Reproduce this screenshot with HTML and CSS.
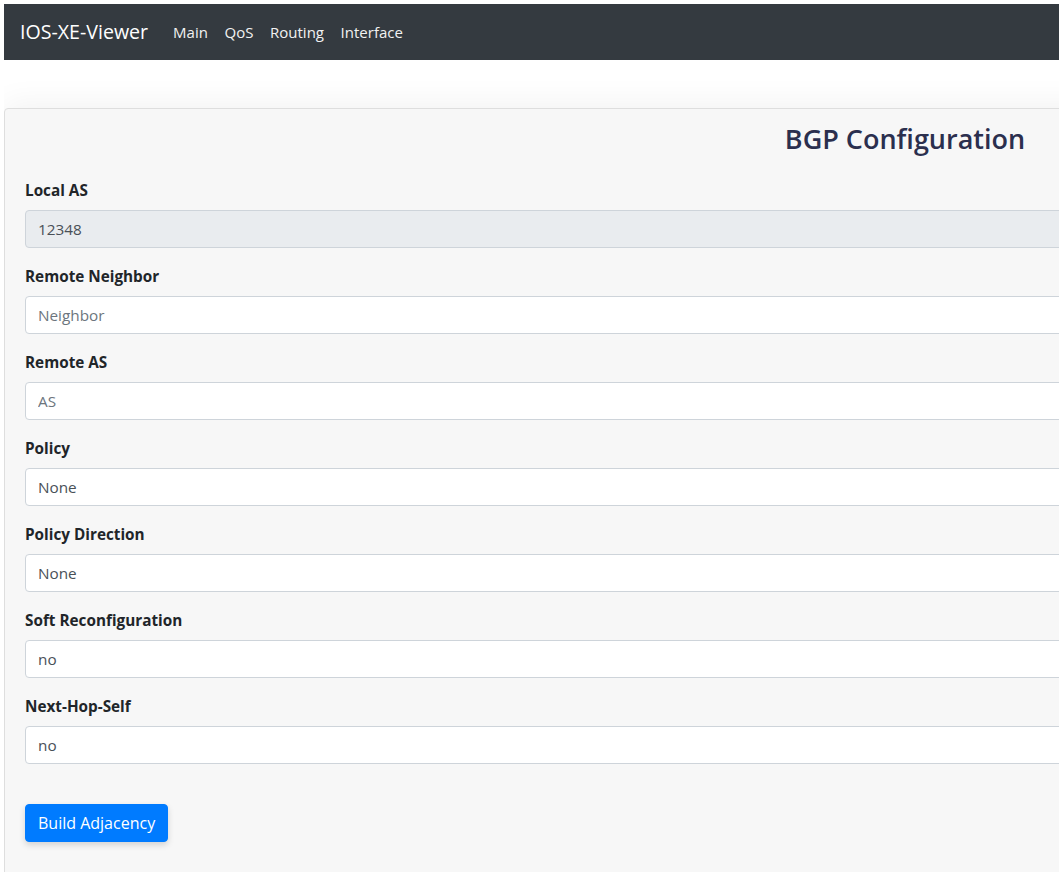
FILE: index.html
```html
<!DOCTYPE html>
<html lang="en">
<head>
<meta charset="utf-8">
<title>IOS-XE-Viewer</title>
<link rel="stylesheet" href="styles.css">
</head>
<body>
<div class="page">
  <nav class="navbar">
    <a class="brand" href="#">IOS-XE-Viewer</a>
    <ul class="nav">
      <li><a href="#">Main</a></li>
      <li><a href="#">QoS</a></li>
      <li><a href="#">Routing</a></li>
      <li><a href="#">Interface</a></li>
    </ul>
  </nav>
  <div class="spacer"></div>
  <div class="card">
    <h3 class="title">BGP Configuration</h3>
    <form class="form">
      <div class="group">
        <label class="label">Local AS</label>
        <input class="control" type="text" value="12348" disabled>
      </div>
      <div class="group">
        <label class="label">Remote Neighbor</label>
        <input class="control" type="text" placeholder="Neighbor">
      </div>
      <div class="group">
        <label class="label">Remote AS</label>
        <input class="control" type="text" placeholder="AS">
      </div>
      <div class="group">
        <label class="label">Policy</label>
        <div class="control select">None</div>
      </div>
      <div class="group">
        <label class="label">Policy Direction</label>
        <div class="control select">None</div>
      </div>
      <div class="group">
        <label class="label">Soft Reconfiguration</label>
        <div class="control select">no</div>
      </div>
      <div class="group">
        <label class="label">Next-Hop-Self</label>
        <div class="control select">no</div>
      </div>
      <div class="actions">
        <button class="btn" type="button">Build Adjacency</button>
      </div>
    </form>
  </div>
</div>
</body>
</html>
```

FILE: styles.css
```css
body {
  margin: 4px 0 0 4px;
  background: #fff;
  font-family: "Open Sans", "Noto Sans", sans-serif;
  font-size: 16px;
  line-height: 1.5;
  color: #212529;
}
.page {
  width: calc(100vw - 4px);
  height: calc(100vh - 4px);
  overflow: hidden;
}
.navbar {
  display: flex;
  align-items: center;
  height: 56px;
  padding: 0 16px;
  background: #343a40;
  box-sizing: border-box;
}
.brand {
  font-size: 19.6px;
  color: #fff;
  text-decoration: none;
  margin-right: 23px;
  line-height: 1;
}
.nav {
  display: flex;
  list-style: none;
  margin: 0;
  padding: 0;
}
.nav a {
  display: block;
  padding: 8px 8.3px;
  font-size: 15px;
  color: #f2f2f2;
  text-decoration: none;
}
.nav li:first-child a { padding-left: 2px; }
.spacer {
  height: 48px;
}
.card {
  box-sizing: border-box;
  width: 1802px;
  background: #f7f7f7;
  border: 1px solid #dedede;
  border-radius: 4px;
  padding: 14px 20px 40px;
  box-shadow: 0 -6px 30px rgba(0, 0, 0, 0.05);
  min-height: 780px;
}
.title {
  margin: 0 0 23px;
  text-align: center;
  font-size: 27px;
  font-weight: 600;
  line-height: 1.2;
  color: #2b2f4e;
}
.group {
  margin-bottom: 16px;
}
.label {
  display: block;
  margin-bottom: 8px;
  font-size: 15.3px;
  line-height: 24px;
  font-weight: 700;
  color: #212529;
}
.control {
  display: block;
  width: 100%;
  height: 38px;
  box-sizing: border-box;
  padding: 6px 12px;
  font-family: inherit;
  font-size: 15.3px;
  line-height: 24px;
  color: #495057;
  background: #fff;
  border: 1px solid #ced4da;
  border-radius: 4px;
}
.control::placeholder {
  color: #6c757d;
}
.control:disabled {
  background: #e9ecef;
  color: #495057;
}
.actions {
  padding-top: 24px;
}
.btn {
  height: 38px;
  padding: 6px 12px;
  font-family: inherit;
  font-size: 16px;
  line-height: 24px;
  color: #fff;
  background: #007bff;
  border: 1px solid #007bff;
  border-radius: 4px;
  box-shadow: 0 3px 6px rgba(0, 0, 0, 0.15);
}
```
